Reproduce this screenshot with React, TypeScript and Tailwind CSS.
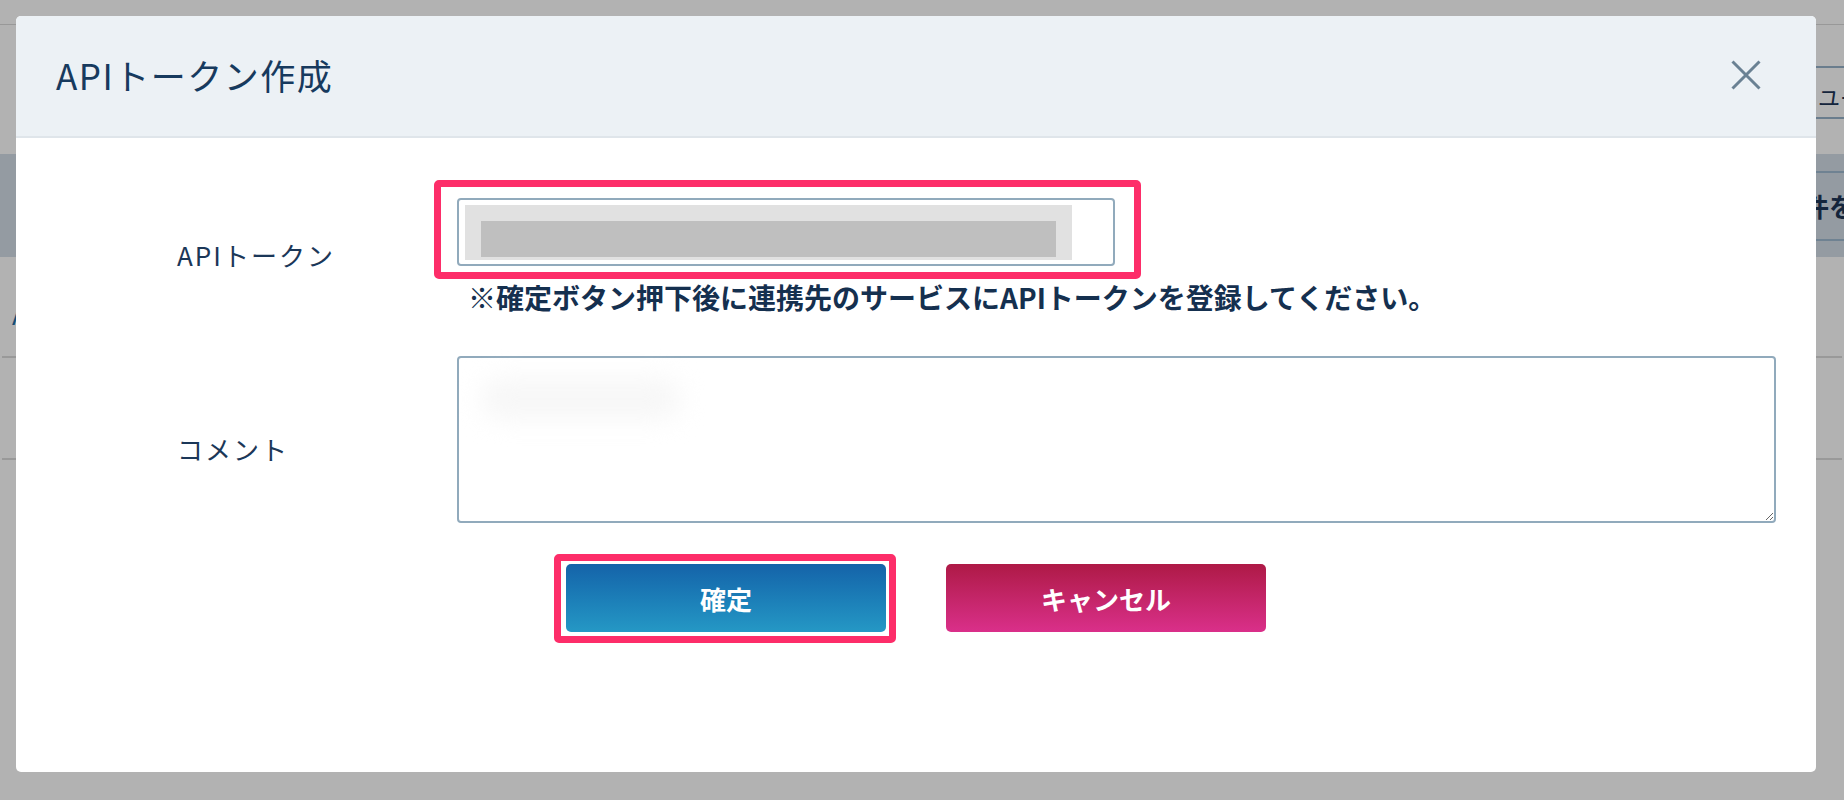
import { useState } from "react";

const BackgroundPage: React.FC = () => {
  return (
    <div className="flex flex-col">
      <div className="h-[25px] border-b border-[#dadada]" />
      <div className="flex h-[129px] justify-end pt-[41px]">
        <div className="-mr-[80px] flex h-[53px] w-[160px] items-center whitespace-nowrap rounded-[4px] border-2 border-[#98b4ca] pl-[52px] pt-[8px] text-[22px] text-[#1d3557]">
          ユーザー
        </div>
      </div>
      <div className="flex h-[103px] items-center justify-end bg-[#d4dfe9]">
        <div className="-mr-[80px] flex h-[70px] w-[150px] items-center whitespace-nowrap rounded-[4px] border-2 border-[#a0bbd2] pl-[27px] text-[26px] font-bold text-[#1d3557]">
          件を追加
        </div>
      </div>
      <div className="mx-[2px] flex h-[101px] items-center border-b-2 border-[#dbdbdb] pl-[10px] pt-[14px] text-[26px] text-[#1f6fa8]">
        API連携設定
      </div>
      <div className="mx-[2px] h-[102px] border-b-2 border-[#dbdbdb]" />
    </div>
  );
};

const App: React.FC = () => {
  const [comment, setComment] = useState("");

  return (
    <div className="relative h-[800px] w-[1844px] overflow-hidden bg-white font-['Noto_Sans_CJK_JP','Noto_Sans',sans-serif]">
      <BackgroundPage />
      <div className="absolute inset-0 bg-black/30" />

      {/* modal */}
      <div className="absolute bottom-7 left-4 right-7 top-4 flex flex-col overflow-hidden rounded-[5px] bg-white">
        <div className="flex h-[122px] shrink-0 items-center justify-between border-b-2 border-[#dfe5ea] bg-[#ecf1f5] pb-[2px] pl-10 pr-[55px]">
          <h2 className="text-[35px] font-normal leading-[40px] tracking-[1.5px] text-[#173a5e]">
            APIトークン作成
          </h2>
          <button type="button" className="h-[30px] w-[30px]">
            <svg viewBox="0 0 30 30" className="h-[30px] w-[30px]">
              <path
                d="M1.5 1.5 L28.5 28.5 M28.5 1.5 L1.5 28.5"
                stroke="#6a8193"
                strokeWidth="3"
                fill="none"
              />
            </svg>
          </button>
        </div>

        <div className="flex flex-col pl-[161px] pr-10 pt-[60px]">
          {/* api token row */}
          <div className="flex">
            <div className="w-[280px] shrink-0 pt-[42px] text-[26px] leading-[30px] tracking-[2px] text-[#1b3758]">
              APIトークン
            </div>
            <div className="flex flex-1 flex-col">
              <div className="relative h-[68px] w-[658px] rounded-[4px] border-2 border-[#91aabc] pl-[6px] pt-[5px]">
                <div className="flex h-[55px] w-[607px] flex-col bg-[#e1e1e1] px-[16px] pt-[16px]">
                  <div className="h-[36px] bg-[#bfbfbf]" />
                </div>
                <div className="pointer-events-none absolute bottom-[-15px] left-[-25px] right-[-28px] top-[-20px] rounded-[5px] border-[7px] border-[#fd2d69]" />
              </div>
              <p className="mt-[14px] pl-[11px] text-[28px] font-bold leading-[34px] text-[#15304f]">
                ※確定ボタン押下後に連携先のサービスにAPIトークンを登録してください。
              </p>
            </div>
          </div>

          {/* comment row */}
          <div className="mt-[42px] flex">
            <div className="w-[280px] shrink-0 pt-[78px] text-[26px] leading-[30px] tracking-[2px] text-[#1b3758]">
              コメント
            </div>
            <div className="relative flex-1">
              <textarea
                value={comment}
                onChange={(e) => setComment(e.target.value)}
                className="block h-[167px] w-full rounded-[4px] border-2 border-[#91aabc] bg-white outline-none"
              />
              <div className="pointer-events-none absolute left-[24px] top-[22px] h-[42px] w-[200px] rounded-full bg-[#f7f7f7] blur-md" />
            </div>
          </div>
        </div>

        {/* buttons */}
        <div className="mt-[41px] flex justify-center gap-[60px]">
          <div className="relative">
            <button
              type="button"
              className="h-[68px] w-[320px] rounded-[5px] bg-linear-to-b from-[#1563a9] to-[#2598c5] text-[26px] font-bold text-white"
            >
              確定
            </button>
            <div className="pointer-events-none absolute bottom-[-11px] left-[-12px] right-[-10px] top-[-10px] rounded-[5px] border-[7px] border-[#fd2d69]" />
          </div>
          <button
            type="button"
            className="h-[68px] w-[320px] rounded-[5px] bg-linear-to-b from-[#ae1946] to-[#da2f8a] text-[26px] font-bold text-white"
          >
            キャンセル
          </button>
        </div>
      </div>
    </div>
  );
};

export default App;
